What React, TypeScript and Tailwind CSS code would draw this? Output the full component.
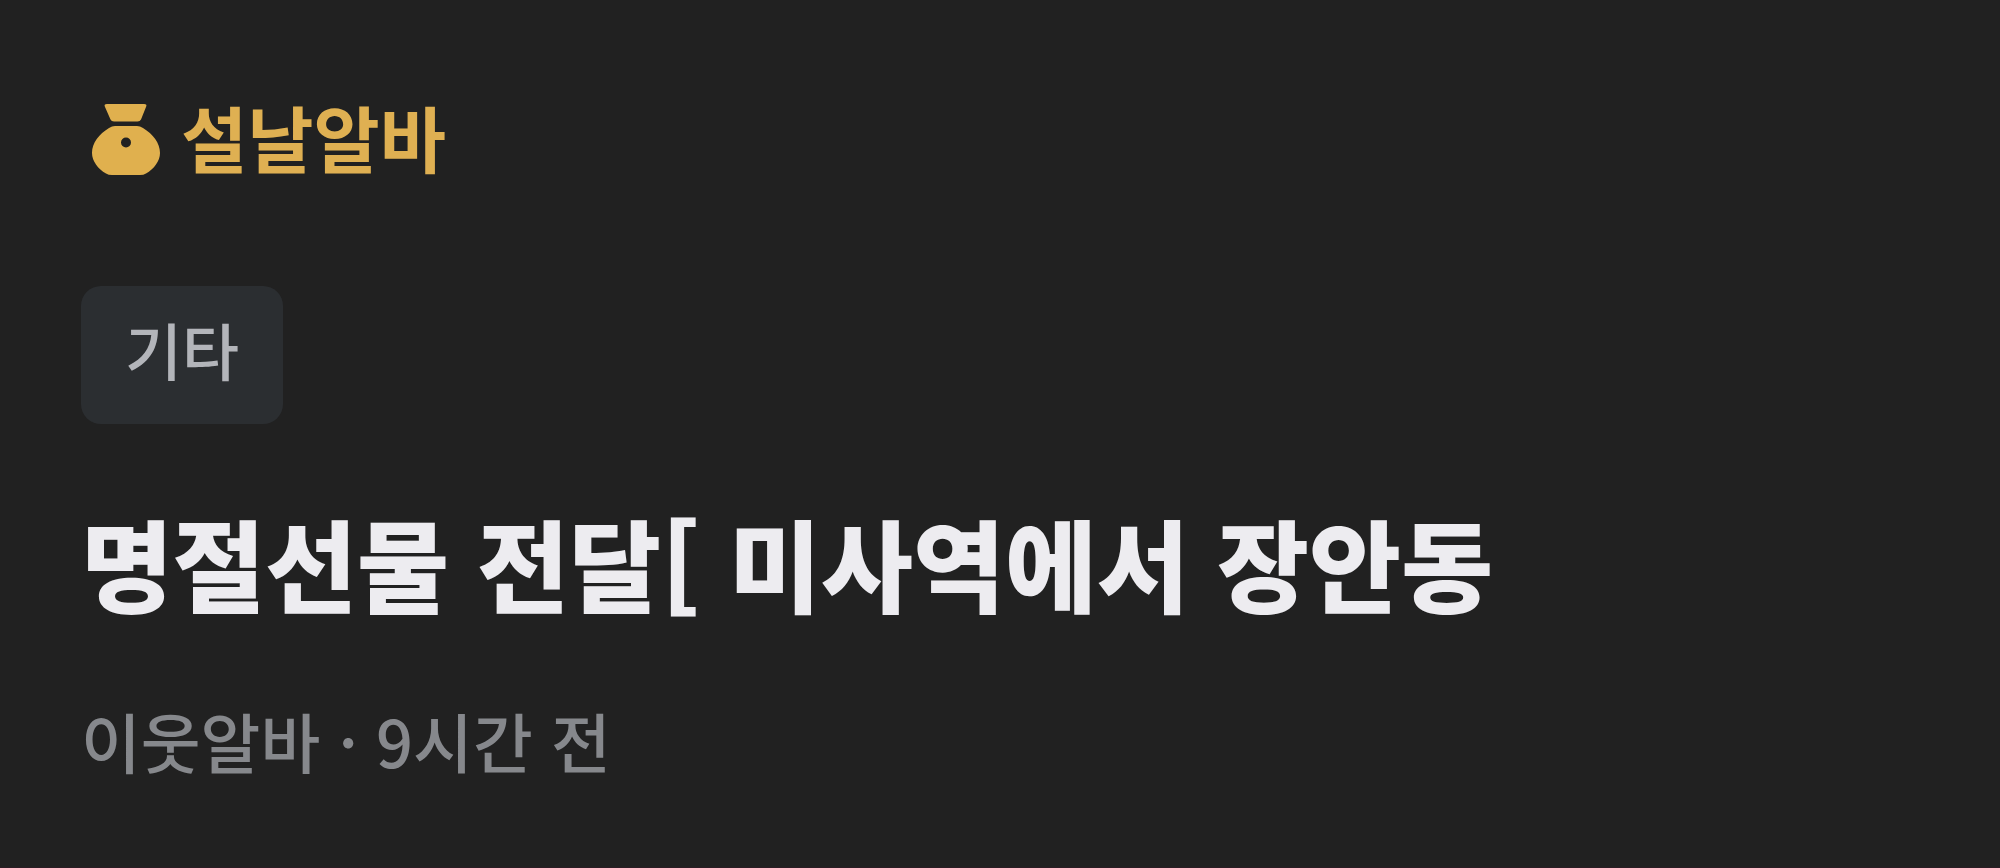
function MoneyBag() {
  return (
    <svg viewBox="0 0 70 72" className="h-[72px] w-[70px] shrink-0" aria-hidden="true">
      <path d="M16 0H53Q56.500 0 55 3L50 15.500Q49 17.500 46.500 17.500H23Q20.500 17.500 19.500 15.500L14 3Q12.500 0 16 0Z" fill="#e0b04e" />
      <path
        fillRule="evenodd"
        d="M24 22Q21 22 18 24C8 30 1 39 1 49C1 57 7 65 15 69.500Q17.500 71 21 71H49Q52.500 71 55 69.500C63 65 69 57 69 49C69 39 62 30 52 24Q49 22 46 22ZM35 33.500a5 5 0 1 0 0 10a5 5 0 1 0 0-10Z"
        fill="#e0b04e"
      />
    </svg>
  );
}

export default function App() {
  return (
    <main
      lang="ko"
      className="flex min-h-screen flex-col items-start border-b border-[#2b1d24] bg-[#212121] px-[81px] pt-24 font-['Noto_Sans_CJK_KR',sans-serif]"
    >
      <div className="flex items-start gap-5 pl-2.5 text-[#dfb052]">
        <div className="pt-2">
          <MoneyBag />
        </div>
        <p className="text-[72px] leading-20 font-bold">설날알바</p>
      </div>
      <span className="mt-[110px] rounded-[20px] bg-[#2b2e31] px-11 pt-[18px] pb-[30px] text-[62px] leading-[90px] font-medium text-[#b3b5ba]">
        기타
      </span>
      <h1 className="mt-[74px] text-[100px] leading-[128px] font-black text-[#edecf0]">
        명절선물 전달[ 미사역에서 장안동
      </h1>
      <p className="mt-[70px] text-[65px] leading-[88px] font-medium text-[#86888c]">이웃알바 · 9시간 전</p>
    </main>
  );
}
